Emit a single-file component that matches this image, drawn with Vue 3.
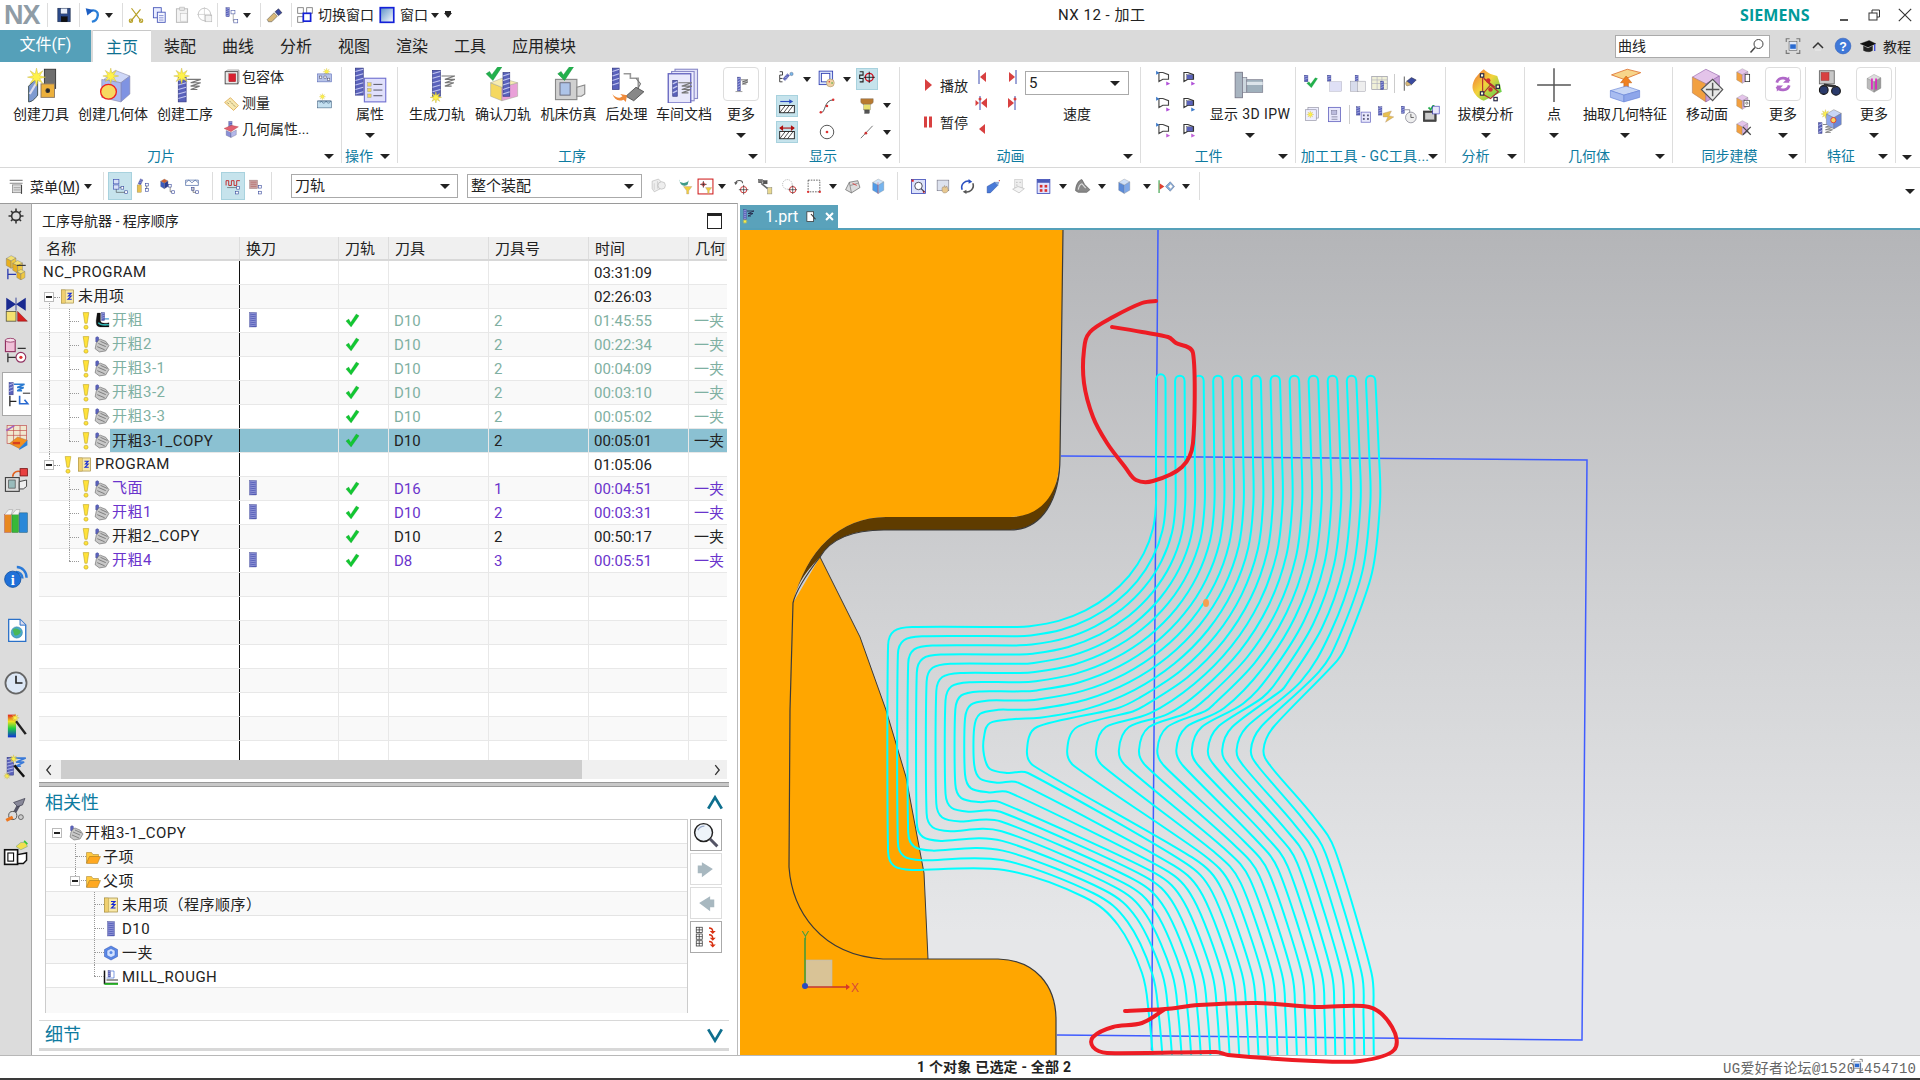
<template>
  <div class="app">
    <!-- title bar -->
    <header class="titlebar">
      <div class="qa">
        <span class="nx">NX</span>
        <i class="vsep"></i>
        <span class="qbtn wide"><Ico n="save" :s="18" /></span>
        <i class="vsep"></i>
        <span class="qbtn"><Ico n="undo" :s="18" /></span><i class="caret small c-undo"></i>
        <i class="vsep"></i>
        <span class="qbtn"><Ico n="cut" :s="18" /></span>
        <span class="qbtn"><Ico n="copy" :s="18" /></span>
        <span class="qbtn dim"><Ico n="paste" :s="18" /></span>
        <span class="qbtn dim"><Ico n="rel" :s="18" /></span>
        <i class="vsep"></i>
        <span class="qbtn"><Ico n="tr1" :s="18" /></span><i class="caret small c-tr"></i>
        <i class="vsep"></i>
        <span class="qbtn b-brush"><Ico n="brush" :s="18" /></span>
        <i class="vsep"></i>
        <span class="qbtn"><Ico n="switchwin" :s="18" /></span>
        <span class="qtext">切换窗口</span>
        <span class="qbtn"><Ico n="win" :s="18" /></span>
        <span class="qtext tight">窗口</span>
        <i class="caret small"></i>
        <i class="caret small under"></i>
      </div>
      <div class="apptitle">NX 12 - 加工</div>
      <div class="siemens">SIEMENS</div>
      <div class="winbtns">
        <Ico n="wmin" :s="16" /><Ico n="wmax" :s="16" /><Ico n="wclose" :s="18" />
      </div>
    </header>

    <!-- tabs -->
    <nav class="tabs">
      <span class="tab-file">文件(F)</span>
      <span class="tab active">主页</span>
      <span v-for="t in tabs" :key="t" class="tab">{{ t }}</span>
      <div class="tabs-right">
        <div class="search"><span>曲线</span><Ico n="mag" :s="16" /></div>
        <span class="tr-ic"><Ico n="fit" :s="18" /></span>
        <span class="tr-ic"><Ico n="chev" :s="16" /></span>
        <span class="tr-ic"><Ico n="help" :s="18" /></span>
        <span class="tr-ic cap"><Ico n="cap" :s="18" /></span>
        <span class="tut">教程</span>
      </div>
    </nav>

    <!-- ribbon -->
    <section class="ribbon">
      <div class="group g1">
        <div class="gbody">
          <div class="big w72"><Ico n="createTool" :s="36" /><span>创建刀具</span></div>
          <div class="big w72"><Ico n="createGeom" :s="36" /><span>创建几何体</span></div>
          <div class="big w72"><Ico n="createOp" :s="36" /><span>创建工序</span></div>
          <div class="smalls">
            <div class="sm"><Ico n="bbox" :s="17" /><span>包容体</span></div>
            <div class="sm"><Ico n="measure" :s="17" /><span>测量</span></div>
            <div class="sm"><Ico n="geoprop" :s="17" /><span>几何属性...</span></div>
          </div>
          <div class="iconcol"><Ico n="s1" :s="17" /><Ico n="s2" :s="17" /></div>
        </div>
        <div class="glabel"><span>刀片</span><i class="caret"></i></div>
      </div>

      <div class="group g2">
        <div class="gbody"><div class="big fill"><Ico n="attr" :s="36" /><span>属性</span><i class="caret"></i></div></div>
        <div class="glabel left"><span>操作</span><i class="caret"></i></div>
      </div>

      <div class="group g3">
        <div class="gbody">
          <div class="big" v-for="b in opBtns" :key="b.t" :class="b.c"><Ico :n="b.n" :s="36" /><span>{{ b.t }}</span></div>
          <div class="big w50"><div class="morebox"><Ico n="more1" :s="22" /></div><span>更多</span><i class="caret"></i></div>
        </div>
        <div class="glabel"><span>工序</span><i class="caret"></i></div>
      </div>

      <div class="group g4">
        <div class="gbody">
          <div class="dispgrid">
            <div v-for="d in dispIcons" :key="d.n" class="dcell">
              <span class="dic" :class="{ on: d.on }"><Ico :n="d.n" :s="18" /></span><i v-if="d.caret" class="caret small"></i>
            </div>
          </div>
        </div>
        <div class="glabel"><span>显示</span><i class="caret"></i></div>
      </div>

      <div class="group g5">
        <div class="gbody">
          <div class="playcol">
            <div class="pl"><Ico n="play" :s="16" /><span>播放</span></div>
            <div class="pl"><Ico n="pause" :s="16" /><span>暂停</span></div>
          </div>
          <div class="animgrid">
            <Ico v-for="a in animIcons" :key="a" :n="a" :s="16" />
          </div>
          <div class="speed">
            <div class="spin"><span>5</span><i class="caret"></i></div>
            <span class="speedlabel">速度</span>
          </div>
        </div>
        <div class="glabel"><span>动画</span><i class="caret"></i></div>
      </div>

      <div class="group g6">
        <div class="gbody">
          <div class="wpgrid"><Ico v-for="w in wpIcons" :key="w" :n="w" :s="18" /></div>
          <div class="big w90"><Ico n="ipw" :s="34" /><span>显示 3D IPW</span><i class="caret"></i></div>
        </div>
        <div class="glabel"><span>工件</span><i class="caret"></i></div>
      </div>

      <div class="group g7">
        <div class="gbody tools">
          <div class="toolrow"><Ico v-for="m in mtTop" :key="m" :n="m" :s="19" :class="{ sepic: m === 'mt5' }" /></div>
          <div class="toolrow"><Ico v-for="m in mtBot" :key="m" :n="m" :s="19" :class="{ sepic: m === 'mt8' }" /></div>
        </div>
        <div class="glabel wide"><span>加工工具 - GC工具...</span><i class="caret"></i></div>
      </div>

      <div class="group g8">
        <div class="gbody"><div class="big fill"><Ico n="draft" :s="38" /><span>拔模分析</span><i class="caret"></i></div></div>
        <div class="glabel"><span>分析</span><i class="caret"></i></div>
      </div>

      <div class="group g9">
        <div class="gbody">
          <div class="big w58"><Ico n="point" :s="36" /><span>点</span><i class="caret"></i></div>
          <div class="big w90b"><Ico n="extract" :s="36" /><span>抽取几何特征</span><i class="caret"></i></div>
        </div>
        <div class="glabel"><span>几何体</span><i class="caret"></i></div>
      </div>

      <div class="group g10">
        <div class="gbody">
          <div class="big w60"><Ico n="moveface" :s="38" /><span>移动面</span></div>
          <div class="iconcol three"><Ico n="sy1" :s="18" /><Ico n="sy2" :s="18" /><Ico n="sy3" :s="18" /></div>
          <div class="big w50"><div class="morebox"><Ico n="sync" :s="22" /></div><span>更多</span><i class="caret"></i></div>
        </div>
        <div class="glabel"><span>同步建模</span><i class="caret"></i></div>
      </div>

      <div class="group g11">
        <div class="gbody">
          <div class="iconcol two"><Ico n="binoc" :s="28" /><Ico n="feat2" :s="28" /></div>
          <div class="big w50"><div class="morebox"><Ico n="featm" :s="22" /></div><span>更多</span><i class="caret"></i></div>
        </div>
        <div class="glabel"><span>特征</span><i class="caret"></i></div>
      </div>
      <div class="ribbon-end"><i class="caret"></i></div>
    </section>

    <!-- toolbar -->
    <section class="toolbar">
      <div class="menu-btn"><Ico n="menu" :s="18" /><span>菜单(<u>M</u>)</span><i class="caret small"></i></div>
      <i class="tsep"></i>
      <span v-for="t in tbLeft" :key="t.n" class="tb" :class="{ on: t.on }" :style="{ width: t.w + 'px' }"><Ico :n="t.n" :s="17" /></span>
      <i class="tsep grow"></i>
      <span v-for="t in tbLeft2" :key="t.n" class="tb" :class="{ on: t.on }" :style="{ width: t.w + 'px' }"><Ico :n="t.n" :s="17" /></span>
      <i class="tsep"></i>
      <div class="sel-box s1"><span>刀轨</span><i class="caret"></i></div>
      <div class="sel-box s2"><span>整个装配</span><i class="caret"></i></div>
      <template v-for="(t, idx) in tbRight" :key="idx">
        <i v-if="t.sep" class="tsep mid"></i>
        <span v-else-if="t.caret" class="tb caretonly"><i class="caret small"></i></span>
        <span v-else class="tb" :style="{ width: t.w + 'px' }"><Ico :n="t.n" :s="17" /></span>
      </template>
      <i class="tsep last"></i>
      <i class="caret corner"></i>
    </section>

    <!-- main -->
    <main class="main">
      <aside class="rail">
        <div v-for="r in railItems" :key="r.n" class="railitem" :class="{ active: r.active }" :style="{ marginTop: r.mt + 'px' }">
          <Ico :n="r.n" :s="r.s || 26" />
        </div>
      </aside>

      <div class="panel">
        <div class="panel-head"><span>工序导航器 - 程序顺序</span><i class="maxbox"></i></div>
        <div class="table">
          <div class="trow thead">
            <div v-for="h in headers" :key="h" class="cell">{{ h }}</div>
          </div>
          <div v-for="(r, idx) in rows" :key="idx" class="trow" :class="[r.color, { alt: idx % 2 === 1, picked: r.sel }]">
            <div class="cell namecell" :class="'lvl' + r.lvl">
              <i v-if="r.tv1" class="tv tv1" :class="r.tv1"></i>
              <i v-if="r.tv2" class="tv tv2" :class="r.tv2"></i>
              <i v-if="r.lvl === 2" class="th"></i>
              <i v-if="r.lvl === 1" class="th th1"></i>
              <span v-if="r.lvl === 1" class="minus"></span>
              <Ico v-if="r.bang" n="bang" :s="18" class="bang" />
              <Ico v-if="r.folder" n="folderp" :s="15" class="fold" />
              <Ico v-if="r.lvl === 2" :n="r.cur ? 'opcur' : 'op'" :s="17" class="opic" />
              <span class="lbl">{{ r.name }}</span>
            </div>
            <div class="cell"><Ico v-if="r.tool" n="toolmini" :s="16" class="toolmini" /></div>
            <div class="cell"><Ico v-if="r.d" n="check" :s="15" class="tick" /></div>
            <div class="cell">{{ r.d }}</div>
            <div class="cell">{{ r.no }}</div>
            <div class="cell">{{ r.time }}</div>
            <div class="cell">{{ r.d ? '一夹' : '' }}</div>
          </div>
          <div v-for="n in 8" :key="'e' + n" class="trow" :class="{ alt: n % 2 === 1 }">
            <div v-for="k in 7" :key="k" class="cell"></div>
          </div>
        </div>
        <div class="hscroll">
          <Ico n="arrL" :s="14" />
          <div class="htrack"><div class="hthumb"></div></div>
          <Ico n="arrR" :s="14" />
        </div>
        <div class="splitter"></div>

        <div class="sect-title"><span>相关性</span><Ico n="up" :s="18" /></div>
        <div class="dep">
          <div class="dep-tree">
            <div v-for="(d, idx) in depRows" :key="idx" class="deprow" :class="{ alt: idx % 2 === 1 }">
              <i v-if="d.vA" class="tv dv1" :class="d.vA"></i>
              <i v-if="d.vB" class="tv dv2" :class="d.vB"></i>
              <i v-if="d.lvl > 0" class="th" :class="'dh' + d.lvl"></i>
              <span v-if="d.minus" class="minus" :class="'dm' + d.lvl"></span>
              <Ico :n="d.ic" :s="16" :class="'di' + d.lvl" />
              <span class="lbl">{{ d.t }}</span>
            </div>
            <div class="deprow alt"></div>
          </div>
          <div class="dep-btns">
            <div class="dbtn strong"><Ico n="search" :s="26" /></div>
            <div class="dbtn"><Ico n="arrGR" :s="22" /></div>
            <div class="dbtn"><Ico n="arrGL" :s="22" /></div>
            <div class="dbtn strong"><Ico n="expand" :s="24" /></div>
          </div>
        </div>
        <div class="sect-title second"><span>细节</span><Ico n="down" :s="18" /></div>
      </div>

      <div class="viewarea">
        <div class="tabstrip">
          <div class="filetab"><Ico n="tabop" :s="16" /><span>1.prt</span><Ico n="tabdoc" :s="12" /><Ico n="tabx" :s="11" /></div>
        </div>
        <div class="canvas">
          <svg class="drawing" width="1180" height="825" viewBox="740 230 1180 825">
            <defs>
              <clipPath id="vp"><rect x="740" y="230" width="1180" height="825" /></clipPath>
            </defs>
            <g clip-path="url(#vp)">
              <!-- part -->
              <path fill="#ffa600" d="M740 230H1063L1060 457C1058 500 1040 517 1010 517H886C840 517 806 550 793 603L790 710 789 867C792 910 820 955 883 959H998C1035 960 1056 985 1056 1020V1055H740Z" />
              <path fill="#ffa600" d="M820 557L860 637 886 710 906 777 924 873 928 959H800L789 867 790 710 793 603Z" />
              <path fill="#5f3c00" d="M1060 457C1060 492 1042 517 1010 517H886C840 517 806 550 793 603 798 580 808 570 820 557 830 540 850 530 884 530H1010C1042 530 1060 500 1060 457Z" />
              <path fill="none" stroke="#3a3a3a" stroke-width="1.2" d="M1063 230L1060 457C1060 500 1042 530 1010 530H884C850 530 830 540 820 557 806 575 796 590 793 603L790 710 789 867C792 910 820 955 883 959H998C1035 960 1056 985 1056 1020V1055" />
              <path fill="none" stroke="#3a3a3a" stroke-width="1" d="M820 557L860 637 886 710 906 777 924 873 928 959" />
              <!-- blue box -->
              <path fill="none" stroke="#3f5cff" stroke-width="1.5" d="M1158 230L1151.5 1050M1061 456L1587 460 1582 1040 1057 1035" />
              <!-- tool path -->
              <path v-for="(d, i) in toolPaths" :key="i" :d="d" fill="none" stroke="#00ffff" stroke-width="2" />
              <ellipse cx="1206" cy="603" rx="3" ry="4" fill="#f4a050" />
              <!-- WCS -->
              <rect x="806" y="960" width="26" height="27" fill="#d9c396" stroke="#bbb" stroke-width=".6" />
              <path d="M805 987V938" stroke="#3a9a3a" stroke-width="1.5" />
              <path d="M805 987H846" stroke="#c8352a" stroke-width="1.5" />
              <path d="M846 984L850 987 846 990Z" fill="#d8352a" />
              <circle cx="805" cy="986" r="3" fill="#2a4ac0" />
              <text x="805" y="940" class="axis y">Y</text>
              <text x="851" y="992" class="axis x">X</text>
            </g>
            <!-- red marks -->
            <path fill="none" stroke="#ed1c24" stroke-width="4" stroke-linejoin="round" stroke-linecap="round" :d="redTop" />
            <path fill="none" stroke="#ed1c24" stroke-width="4" stroke-linejoin="round" stroke-linecap="round" :d="redBottom" />
          </svg>
        </div>
      </div>
    </main>

    <!-- status -->
    <footer class="status">
      <span class="status-text">1 个对象 已选定 - 全部 2</span>
      <span class="watermark">UG爱好者论坛@15201454710</span>
      <Ico n="fit" :s="14" class="wm-ic" />
    </footer>
    <div class="bottomedge"></div>
  </div>
</template>

<script setup>
import { h } from 'vue'

// tiny svg string helpers, every icon is drawn on a 32x32 box
const P = (d, f = 'none', s = '#333', w = 1.5) => `<path d="${d}" fill="${f}" stroke="${s}" stroke-width="${w}"/>`
const R = (x, y, w, hh, f, s = '#333', sw = 1) => `<rect x="${x}" y="${y}" width="${w}" height="${hh}" fill="${f}" stroke="${s}" stroke-width="${sw}"/>`
const C = (cx, cy, r, f, s = '#333', sw = 1) => `<circle cx="${cx}" cy="${cy}" r="${r}" fill="${f}" stroke="${s}" stroke-width="${sw}"/>`

const burst = (cx, cy, r) => {
  const pts = []
  for (let k = 0; k < 16; k++) {
    const a = (k * Math.PI) / 8
    const q = k % 2 ? r * 0.38 : r
    pts.push(`${(cx + q * Math.cos(a)).toFixed(1)},${(cy + q * Math.sin(a)).toFixed(1)}`)
  }
  return `<polygon points="${pts.join(' ')}" fill="#fff24a" stroke="#c9b53a" stroke-width=".4"/>`
}
const mill = (x, y, w, hh) => {
  let s = R(x, y, w, hh, '#5a62bb', '#30357f', 0.6)
  for (let k = 3; k < hh; k += 4) s += P(`M${x} ${y + k}l${w} -2`, 'none', '#c4c8f0', 1)
  return s
}
const trail = (x, y) => P(`M${x} ${y}h12l-9 3h9l-9 3h8l-8 3h6`, 'none', '#777', 1)
const tick = (x, y, k = 1) => P(`M${x} ${y + 5 * k}l${3 * k} ${-2 * k} ${2 * k} ${3 * k} ${6 * k} ${-8 * k} ${3 * k} ${1 * k} ${-8 * k} ${12 * k}Z`, '#22b14c', '#118a3a', 0.4)
const cube = (x, y, k, a, b, c) =>
  P(`M${x} ${y + 6 * k}L${x + 10 * k} ${y}L${x + 20 * k} ${y + 5 * k}L${x + 10 * k} ${y + 11 * k}Z`, a, '#777', 0.5) +
  P(`M${x} ${y + 6 * k}L${x + 10 * k} ${y + 11 * k}V${y + 26 * k}L${x} ${y + 20 * k}Z`, b, '#777', 0.5) +
  P(`M${x + 10 * k} ${y + 11 * k}L${x + 20 * k} ${y + 5 * k}V${y + 20 * k}L${x + 10 * k} ${y + 26 * k}Z`, c, '#777', 0.5)
const tri = (flip, c) => (flip ? P('M22 6L10 16 22 26Z', c, 'none') : P('M10 6L22 16 10 26Z', c, 'none'))
const wp = (x, c) => P('M7 8H14L24 12V20H14L7 24V8Z', '#fff', '#444', 2) + P('M2 5L8 9 2 12Z', '#3b78c8', 'none') + P('M20 24L27 28 20 31Z', c, 'none')
const wpb = (x, c) => P('M7 8H14L24 12V20H14L7 24V8Z', '#fff', '#333', 2) + R(12, 12, 11, 8, '#5a62bb', '#333', 0.6) + P('M20 24L27 28 20 31Z', c, 'none')
const small2 = (x, y) => R(x, y, 5, 5, '#fff', '#4050a0', 1.2)

const icons = {
  save: R(5, 4, 22, 24, '#2c4a8a', '#112244') + R(10, 4, 12, 10, '#e8eefa', '#112244', 0.6) + R(11, 19, 11, 9, '#111', '#000', 0.5),
  undo: P('M9 12C15 4 27 8 24 19 23 24 19 27 14 28', 'none', '#2a7fd8', 4) + P('M3 4L17 7 6 17Z', '#1d5fc4', 'none'),
  cut: P('M6 28L24 6M26 28L8 4', 'none', '#b8a22a', 2.2) + C(7, 26, 3, 'none', '#b8a22a', 2) + C(25, 26, 3, 'none', '#b8a22a', 2),
  copy: R(6, 3, 14, 18, '#e8ecff', '#3f4fb5', 1.5) + R(13, 11, 14, 18, '#f3f5ff', '#3f4fb5', 1.5) + P('M16 17h8M16 21h8M16 25h8', 'none', '#3f4fb5', 1),
  paste: R(6, 5, 20, 24, '#eee', '#999', 1.5) + R(12, 2, 8, 6, '#ddd', '#999', 1) + R(13, 13, 12, 14, '#f8f8f8', '#aaa', 1),
  rel: C(15, 15, 11, 'none', '#aaa', 1.5) + P('M15 2V28M2 15H28', 'none', '#aaa', 1) + R(17, 17, 11, 11, '#eee', '#999', 1),
  tr1: mill(7, 3, 6, 16) + R(16, 8, 7, 6, '#fff', '#4050a0', 1) + R(21, 24, 7, 6, '#fff', '#4050a0', 1) + P('M20 14V27H21', 'none', '#777', 1),
  brush: P('M4 24L16 12 22 18 12 28 6 28Z', '#d8b878', '#555', 1) + P('M18 10L24 5 30 12 24 17Z', '#3a4aa0', '#223', 1),
  switchwin: R(3, 3, 10, 10, '#fff', '#777', 1.5) + R(19, 3, 10, 10, '#fff', '#777', 1.5) + R(3, 19, 10, 10, '#fff', '#777', 1.5) + R(13, 13, 13, 14, '#fff', '#1320d8', 3),
  win: `<defs><linearGradient id="gw" x1="0" y1="0" x2="1" y2="1"><stop offset="0" stop-color="#5a8fc8"/><stop offset="1" stop-color="#fff"/></linearGradient></defs>` + R(4, 3, 24, 26, 'url(#gw)', '#1320d8', 3),
  wmin: P('M8 26H24', 'none', '#555', 4),
  wmax: R(6, 12, 16, 14, '#fff', '#333', 2) + P('M12 12V6H27V20H22', 'none', '#333', 2),
  wclose: P('M5 5L27 27M27 5L5 27', 'none', '#333', 2),
  mag: C(19, 12, 9, '#fff', '#444', 2) + P('M12 19L3 29', 'none', '#444', 3),
  fit: P('M4 9V3H10M22 3H28V9M28 23V29H22M10 29H4V23', 'none', '#777', 2) + R(9, 8, 14, 16, '#dfe8f8', '#555', 1) + R(11, 13, 10, 8, '#2a6ad0', 'none', 0),
  chev: P('M6 20L16 10 26 20', 'none', '#333', 3) + P('M10 24H22', 'none', '#fff', 1),
  help: C(16, 16, 14, '#3f78d8', '#2a5ab8', 1) + `<text x="16" y="24" text-anchor="middle" font-size="22" font-weight="700" font-family="Liberation Sans" fill="#fff">?</text>`,
  cap: P('M2 12L18 6 30 12 16 18Z', '#111', '#000', 0.5) + P('M8 16V24C14 27 20 27 24 24V16L16 20Z', '#222', '#000', 0.5) + P('M28 13V25', 'none', '#2233dd', 2),

  createTool: P('M5 31V17L13 9V25C11 28 8 31 5 31Z', '#7d9ad0', '#344', 0.8) + P('M6 24L12 14', 'none', '#dde', 2) + R(19, 2, 10, 17, '#6e6e6e', '#333', 0.8) + R(16, 15, 12, 12, '#ecb03c', '#876', 0.8) + C(22, 21, 1.6, '#222') + burst(12, 9, 8),
  createGeom: P('M8 11L18 3 31 8 23 14Z', '#cfd8f8', '#88a', 0.5) + P('M23 14L31 8V24L23 31Z', '#7f93e2', '#88a', 0.5) + P('M6 11L23 14V31L6 27Z', '#a9b7f0', '#88a', 0.5) + `<ellipse cx="12" cy="22" rx="7" ry="6.5" fill="#f7d860" stroke="#e22" stroke-width="1.2"/>` + burst(14, 8, 7),
  createOp: mill(10, 9, 7, 22) + trail(18, 11) + burst(13, 8, 7),
  attr: mill(3, 1, 7, 24) + R(11, 10, 19, 21, '#e0e0fb', '#7070d0', 1) + [14, 19, 24].map((y) => R(14, y, 3, 3, '#f0d860', '#998', 0.4) + P(`M19 ${y + 1.5}h8`, 'none', '#667', 1)).join(''),
  genPath: mill(12, 3, 7, 23) + trail(20, 8) + burst(15, 27, 5),
  verify: P('M5 14L15 18V30L5 26Z', '#f5d860', '#aa9', 0.5) + P('M15 18L29 14V26L15 30Z', '#e9a0d8', '#aa9', 0.5) + P('M5 14L15 10 29 14 15 18Z', '#f7ecb0', '#aa9', 0.5) + mill(16, 5, 6, 21) + tick(1, 1, 1),
  machine: R(4, 11, 19, 18, '#d0d0d0', '#888', 1) + R(8, 14, 9, 11, '#aec4e8', '#667', 0.8) + P('M23 18L30 16V24L27 26H23Z', '#ddd', '#888', 1) + tick(6, 1, 1),
  post: mill(3, 1, 6, 19) + P('M13 6H19V10H26V22', 'none', '#999', 1.4) + P('M24 10L28 15 24 22', 'none', '#777', 1) + P('M15 26L24 18 31 22 22 30Z', '#888', '#444', 0.7) + P('M3 24C6 28 10 28 12 26L10 24 16 25 15 31 13 29C8 31 5 29 3 24Z', '#ef8a3a', 'none'),
  shopdoc: R(8, 2, 20, 26, '#e6e6fa', '#8a8ac8', 1) + R(5, 4, 20, 26, '#eef', '#8a8ac8', 1) + R(2, 6, 20, 26, '#e8e8fb', '#6666c0', 1.2) + mill(6, 12, 4, 14) + trail(11, 14),
  more1: mill(11, 6, 4, 20) + P('M16 10h10l-8 3h8l-8 3h6', 'none', '#555', 1.2) + P('M8 27h10', 'none', '#777', 1),
  ipw: R(2, 4, 7, 24, '#a8b4c0', '#778', 0.8) + R(9, 9, 4, 14, '#ccd6de', '#778', 0.6) + R(13, 11, 15, 12, '#9fb0bc', '#778', 0.6) + R(13, 13, 15, 3, '#dce4ea', 'none', 0),
  draft: `<defs><linearGradient id="gd" x1="0" y1="0" x2="1" y2="1"><stop offset="0" stop-color="#ef6a38"/><stop offset=".45" stop-color="#f3d43c"/><stop offset="1" stop-color="#38cf50"/></linearGradient></defs>` + P('M14 2C8 7 4 12 4 18 4 22 8 28 14 30L30 22 28 14 26 8C22 7 18 6 14 2Z', 'url(#gd)', 'none') + P('M13 8V24L20 16 27 22 20 28 13 24M20 16L14 10 24 18', 'none', '#b03030', 1) + R(11, 6, 3, 3, '#ffd', '#224', 1) + R(11, 22, 3, 3, '#ffd', '#224', 1) + R(25, 16, 3, 3, '#ffd', '#224', 1) + R(23, 27, 3, 3, '#ffd', '#224', 1) + C(18, 12, 2, '#d03030', 'none') + C(20, 20, 2, '#d03030', 'none'),
  point: P('M16 1V31M1 16H31', 'none', '#555', 1.3),
  extract: P('M4 7L18 2 30 5 15 11Z', '#f7d58a', '#e07a3a', 0.8) + P('M15 21V14H12L17 8 22 14H19V21Z', '#f08020', '#c06010', 0.5) + P('M3 21L17 17 29 21 15 25Z', '#c8d6f5', '#6a86d8', 0.6) + P('M3 21L15 25V31L3 27Z', '#a8bcf0', '#6a86d8', 0.6) + P('M15 25L29 21V27L15 31Z', '#8ea6ea', '#6a86d8', 0.6),
  moveface: P('M3 9L15 2 27 8 15 15Z', '#e4c4ea', '#9a6ab0', 0.6) + P('M3 9L15 15V31L3 23Z', '#f2a040', '#b86', 0.6) + P('M15 15L27 8V24L15 31Z', '#c8a0d8', '#9a6ab0', 0.6) + P('M21 11L30 20 21 30 11 20Z', '#e8e8e8', '#555', 1) + P('M21 14V26M15 20H27', 'none', '#555', 1.3),
  sy1: cube(3, 3, 1, '#e4c4ea', '#f2a040', '#d8b0e0') + R(18, 13, 8, 13, '#fff', '#333', 1.4),
  sy2: cube(3, 3, 1, '#e4c4ea', '#f2a040', '#d8b0e0') + R(16, 13, 10, 11, '#fff', '#333', 1.2) + C(21, 18, 2, 'none', '#333', 1),
  sy3: cube(3, 3, 1, '#e4c4ea', '#f2a040', '#d8b0e0') + P('M14 14L28 28M28 14L14 28', 'none', '#444', 2.2),
  sync: P('M7 14C9 6 21 5 25 12', 'none', '#b068c8', 4) + P('M25 5V14H16Z', '#b068c8', 'none') + P('M25 18C23 26 11 27 7 20', 'none', '#b068c8', 4) + P('M7 27V18H16Z', '#b068c8', 'none'),
  binoc: R(5, 2, 17, 15, '#c8c8c8', '#666', 1) + R(7, 4, 9, 9, '#d84040', '#933', 0.6) + C(10, 24, 5, '#2a3a6a', '#111', 1.2) + C(24, 25, 5, '#2a3a6a', '#111', 1.2) + P('M10 18L24 20', 'none', '#333', 3),
  feat2: mill(4, 18, 4, 12) + trail(9, 20) + burst(12, 8, 5) + cube(13, 3, 0.85, '#c8d6f5', '#8ea6ea', '#6a86d8') + C(21, 15, 3, '#f7d860', '#d33', 1),
  featm: cube(6, 2, 1, '#ddd', '#bbb', '#999') + P('M13 8V24M19 8V24', 'none', '#e020c0', 2.4),

  bbox: R(4, 5, 24, 23, '#e8e8e8', '#333', 1.5) + R(11, 9, 13, 15, '#d82030', '#711', 0.6) + P('M4 5L9 2H30V24L28 28', 'none', '#555', 1),
  measure: P('M3 14L14 5 29 20 20 29Z', '#f7e8b0', '#d8a040', 1.4) + P('M8 14l3 3M12 11l3 3M16 15l3 3M20 19l3 3', 'none', '#8a7a4a', 1.4),
  geoprop: mill(11, 1, 6, 11) + P('M2 14L16 8 29 11 15 20Z', '#e06070', '#a33', 0.6) + P('M6 18L15 22V31L6 27Z', '#8a90d8', '#557', 0.6) + P('M15 22L25 17V26L15 31Z', '#b4b8ea', '#557', 0.6),
  s1: burst(20, 9, 7) + R(3, 13, 26, 15, '#b8c4e8', '#4a5ab0', 1) + R(7, 17, 4, 4, '#fff', '#335', 0.8) + R(15, 17, 4, 4, '#fff', '#335', 0.8) + R(22, 21, 4, 4, '#fff', '#335', 0.8),
  s2: burst(12, 7, 6) + R(3, 15, 26, 13, '#c4e0f0', '#357', 1) + P('M4 15h24l-3 4h-3l-3-4-3 4h-3l-3-4-3 4', 'none', '#357', 1),

  d1: P('M3 3H8V9H3M3 9V15H8M3 15V21H8', 'none', '#333', 1.6) + mill(12, 7, 5, 12).replace('<rect', '<rect transform="rotate(40 15 13)"') + C(24, 7, 3, '#7ab8e8', '#446', 0.6),
  d2: R(2, 2, 24, 24, '#dbe6fa', '#2a3ab0', 1.5) + R(6, 6, 15, 15, '#fff', '#2a3ab0', 1.5) + C(22, 23, 7, '#f0d0a0', '#985', 0.8) + C(20, 21, 1.3, '#d33', 'none') + C(25, 23, 1.3, '#3a3', 'none'),
  d3: P('M3 3H9V9H3V15H9V21H3', 'none', '#222', 2) + C(20, 13, 7, 'none', '#d01020', 2.5) + P('M20 3V23M10 13H30', 'none', '#111', 1.5),
  d4: P('M4 8H23', 'none', '#2a4ac0', 2) + P('M20 4L27 8 20 12Z', '#2a4ac0', 'none') + R(3, 15, 26, 13, '#fff', '#111', 1.5) + P('M3 28L13 15M10 28L20 15M17 28L27 15', 'none', '#111', 1.3),
  d5: P('M5 28C14 28 10 6 27 5', 'none', '#333', 1.5) + C(5, 27, 2.2, '#d33', 'none') + C(16, 16, 2.2, '#d33', 'none') + C(27, 5, 2.2, '#d33', 'none'),
  d6: P('M5 3H27V9C27 12 22 13 22 13H10C10 13 5 12 5 9Z', '#b87a30', '#765', 0.8) + R(10, 13, 12, 10, '#e8e070', '#776', 0.6) + R(12, 23, 8, 6, '#555', '#222', 0.6),
  d7: P('M4 9H28', 'none', '#b01010', 2) + P('M2 9L9 4V14ZM30 9L23 4V14Z', '#b01010', 'none') + R(3, 15, 26, 13, '#fff', '#111', 1.5) + P('M3 28L13 15M10 28L20 15M17 28L27 15', 'none', '#111', 1.3),
  d8: C(16, 16, 12, '#fff', '#444', 1.6) + C(16, 16, 2.4, '#d33', 'none'),
  d9: P('M5 27L26 5', 'none', '#444', 1.3) + C(14, 18, 2.4, '#c33', 'none'),

  play: P('M10 4L24 16 10 28Z', '#d84040', 'none'),
  pause: R(8, 5, 6, 22, '#d84040', 'none', 0) + R(18, 5, 6, 22, '#d84040', 'none', 0),
  a1: P('M10 2V30', 'none', '#3a4ab0', 2) + P('M24 6L12 16 24 26Z', '#d84040', 'none'),
  a2: P('M22 2V30', 'none', '#3a4ab0', 2) + P('M8 6L20 16 8 26Z', '#d84040', 'none'),
  a3: P('M12 2V30', 'none', '#3a4ab0', 2) + P('M26 6L14 16 26 26Z', '#d84040', 'none') + C(12, 8, 3, '#d84040', 'none') + P('M3 10L10 16 3 22Z', '#d84040', 'none'),
  a4: P('M20 2V30', 'none', '#3a4ab0', 2) + P('M6 6L18 16 6 26Z', '#d84040', 'none') + C(20, 8, 3, '#d84040', 'none'),
  a5: tri(true, '#d84040'),

  w1: wp(0, '#b050d8'), w2: wpb(0, '#b050d8'), w3: wp(0, '#b050d8'), w4: wpb(0, '#3a78c8'), w5: wp(0, '#c060d8'), w6: wpb(0, '#c060d8'),

  mt1: mill(4, 2, 6, 11) + tick(8, 9, 1.3),
  mt2: mill(4, 2, 6, 10) + R(8, 13, 20, 16, '#dfe0f6', '#99a', 0.6),
  mt3: mill(12, 2, 5, 12) + R(4, 12, 14, 17, '#d8dcec', '#778', 0.6) + R(16, 12, 13, 17, '#eee', '#778', 0.6),
  mt4: R(3, 4, 26, 22, '#f0f0d8', '#889', 1) + P('M3 10H29M3 16H29M12 4V26M20 4V26', 'none', '#aab', 1) + mill(18, 12, 5, 14),
  mt5: P('M9 4V28', 'none', '#777', 2) + P('M13 12L21 6 29 10 21 18Z', '#3a4aa0', '#223', 0.8) + P('M13 12C10 14 11 20 14 20L21 18Z', '#d8b878', '#555', 0.6),
  mt6: R(10, 4, 18, 18, '#eef', '#889', 1) + R(6, 8, 18, 18, '#eef', '#889', 1) + burst(14, 16, 6),
  mt7: R(6, 4, 20, 24, '#e8e8fb', '#6666c0', 1.4) + R(11, 9, 9, 7, '#bbd', '#557', 0.6) + P('M11 20h10M11 24h10', 'none', '#557', 1),
  mt8: mill(4, 3, 6, 14) + R(12, 12, 16, 17, '#e8e8fb', '#6666c0', 1.2) + [16, 22].map((y) => R(15, y, 3, 3, '#557', 'none', 0) + R(22, y, 3, 3, '#557', 'none', 0)).join(''),
  mt9: mill(4, 3, 6, 14) + P('M12 14L26 10 22 18 30 20 16 29 20 20 12 20Z', '#e8c050', '#a87', 0.6),
  mt10: mill(4, 2, 5, 12) + P('M10 8H18V14', 'none', '#667', 1.2) + C(20, 21, 9, '#eee', '#667', 1) + P('M20 15V21H25', 'none', '#333', 1.2),
  mt11: R(2, 10, 22, 18, '#444', '#111', 0.6) + R(5, 13, 16, 12, '#ccc', '#444', 0.6) + tick(10, 1, 0.8) + R(18, 2, 11, 13, '#e8e8fb', '#3030b0', 1),

  menu: P('M3 6H26M3 11H26', 'none', '#888', 2) + R(8, 14, 16, 14, '#ddd', '#666', 1) + P('M10 19H22M10 23H22', 'none', '#888', 1.2) + P('M24 14V30', 'none', '#444', 2),
  t1: R(3, 3, 10, 8, '#d8e0f8', '#3a4ab0', 1.2) + R(3, 13, 10, 8, '#d8e0f8', '#3a4ab0', 1.2) + small2(17, 16) + small2(24, 24) + P('M8 21V27H24M14 18H17', 'none', '#333', 1),
  t2: mill(8, 2, 5, 10).replace('<rect', '<rect transform="rotate(25 10 7)"') + R(4, 13, 8, 14, '#e8c050', '#776', 0.6) + small2(20, 10) + small2(20, 20) + P('M22 15V20', 'none', '#333', 1),
  t3: cube(3, 2, 0.7, '#d06030', '#3a5ac0', '#2a3a90') + small2(18, 12) + small2(24, 24) + P('M21 17V26H24', 'none', '#333', 1),
  t4: P('M3 4H27V14H3ZM3 9L9 4 15 9 21 4 27 9', 'none', '#3a5a9a', 1.2) + small2(14, 18) + small2(22, 24) + P('M17 18V27H22', 'none', '#333', 1),
  t5: P('M2 14V5H7V14H12V5H17V14H22V5H28', 'none', '#c01010', 1.6) + P('M4 18H26', 'none', '#333', 1) + small2(22, 16) + small2(20, 25),
  t6: R(3, 4, 15, 16, '#c9a0a0', '#977', 0.8) + P('M5 8h11M5 12h11M5 16h11', 'none', '#b06060', 1) + small2(20, 14) + small2(20, 25),
  t7: P('M4 6L16 2 20 6V20L8 26 4 20Z', '#eee', '#aaa', 1) + P('M8 10V22M14 6V20', 'none', '#bbb', 1) + C(22, 14, 7, '#eee', '#aaa', 1),
  t8: P('M6 3C4 10 20 12 24 4L22 12C14 18 8 14 6 3Z', '#3f9a88', 'none') + P('M14 16H30L24 24V30H20V24Z', '#f0d040', '#a88', 0.6),
  t9: R(2, 2, 28, 28, '#fff', '#d02020', 2) + P('M12 6V18M6 12H18', 'none', '#111', 1.4) + C(12, 12, 3, 'none', '#d02020', 1.4) + P('M16 18H28L23 24V29H20V24Z', '#f0d040', '#a88', 0.6),
  t10: P('M5 10C6 3 18 3 18 10', 'none', '#555', 2) + P('M2 8H9L5 13Z', '#555', 'none') + C(20, 22, 6, 'none', '#d02020', 1.6) + P('M20 13V31M11 22H29', 'none', '#222', 1.2),
  t11: R(3, 3, 7, 6, '#777', '#333', 0.8) + R(12, 5, 7, 6, '#555', '#333', 0.8) + P('M8 10L20 20', 'none', '#666', 3) + R(20, 18, 8, 12, '#e8d890', '#776', 0.8),
  t12: C(12, 12, 9, '#fff', '#777', 1).replace('stroke="#777"', 'stroke="#777" stroke-dasharray="2 2"') + C(22, 22, 6, 'none', '#d02020', 1.6) + P('M22 14V30M14 22H30', 'none', '#222', 1.2),
  t13: `<rect x="4" y="4" width="22" height="22" fill="none" stroke="#333" stroke-width="1.4" stroke-dasharray="3 2"/>` + C(4, 26, 2.2, '#d33', 'none') + C(26, 26, 2.2, '#d33', 'none'),
  t14: P('M3 22L10 8 26 5 30 18 14 28Z', '#ddd', '#555', 1.2) + P('M10 8L14 28M12 14L26 10', 'none', '#555', 1) + P('M16 10L24 14', 'none', '#d33', 1.5),
  t15: cube(5, 2, 1.05, '#cfe4f8', '#4f9ae8', '#75b4ee') + P('M15 8V30', 'none', '#e04060', 0.8),
  t16: R(3, 3, 26, 26, '#dce2fa', '#2a3ab0', 1.4) + R(3, 3, 4, 4, '#d22', 'none', 0) + C(26, 26, 2, '#d22', 'none') + C(16, 15, 7, '#fff', '#334', 1.6) + P('M21 20L27 26', 'none', '#334', 2),
  t17: R(4, 4, 22, 20, '#dde2ee', '#667', 1) + P('M14 26C12 20 14 14 17 18L18 14 20 18 22 15 25 22C25 28 16 30 14 26Z', '#e8c890', '#876', 0.8),
  t18: P('M6 22C2 12 12 4 20 6', 'none', '#2a50c0', 3) + P('M18 2L25 7 18 11Z', '#2a50c0', 'none') + P('M26 10C30 20 20 28 12 26', 'none', '#555', 3) + P('M14 22L7 26 14 30Z', '#555', 'none'),
  t19: P('M4 28V16L18 8 24 14 10 28Z', '#4a7ad8', '#2a4a98', 0.8) + P('M18 8L24 14 26 8Z', '#8ab0ea', '#2a4a98', 0.6) + C(27, 5, 1.2, '#d33', 'none'),
  t20: R(9, 3, 14, 16, '#eee', '#bbb', 1) + C(13, 8, 1, '#999', 'none') + C(19, 8, 1, '#999', 'none') + C(13, 13, 1, '#999', 'none') + P('M5 21L15 16 27 20 17 28Z', '#f4f4f4', '#aaa', 1),
  t21: R(4, 3, 24, 26, '#e0e4ff', '#2a3ab0', 1.4) + R(4, 3, 24, 6, '#4a5ab8', 'none', 0) + [13, 21].map((y) => R(9, y, 5, 5, '#d83030', 'none', 0) + R(18, y, 5, 5, '#d83030', 'none', 0)).join(''),
  t22: P('M3 24C3 14 8 4 15 3L20 12 30 22 24 27H8Z', '#888', '#444', 1) + P('M8 22C9 16 12 12 15 11L22 19', 'none', '#ddd', 2),
  t23: cube(5, 2, 1.05, '#cfe0f8', '#5a8ad8', '#7fa8e8'),
  t24: P('M2 4V28', 'none', '#2a9a3a', 2) + P('M3 10L12 16 3 22Z', '#e04030', 'none') + P('M14 16L23 7 31 16 23 25Z', '#7fb0e0', '#557', 0.8) + P('M19 16L24 11 28 16 24 21Z', '#fff', '#557', 0.6),

  r_gear: C(16, 16, 7, 'none', '#333', 2.5) + P('M16 4V9M16 23V28M4 16H9M23 16H28M8 8L11 11M21 21L24 24M24 8L21 11M11 21L8 24', 'none', '#333', 2.5),
  r_asm: cube(4, 2, 0.6, '#f4e070', '#e8b020', '#f0c840') + cube(12, 8, 0.6, '#f4e070', '#e8b020', '#f0c840') + P('M6 18V31M6 25H16', 'none', '#2a3ab0', 1.6) + P('M28 14H17', 'none', '#333', 1.4) + cube(17, 19, 0.5, '#f4e070', '#e8b020', '#f0c840'),
  r_align: P('M4 2L16 10 28 2V18L16 10 4 18Z', '#1a2a90', 'none') + P('M16 2V18', 'none', '#1a2a90', 1) + R(4, 19, 12, 12, '#f4e070', '#554', 1) + P('M18 19L30 31H18Z', '#d82020', '#711', 0.6),
  r_cyl: R(3, 4, 12, 14, '#f0c0d8', '#903060', 1.4) + `<ellipse cx="9" cy="4" rx="6" ry="2.4" fill="#f8e0ec" stroke="#903060"/>` + P('M6 20V31M6 25H16M18 14H28', 'none', '#333', 1.6) + C(22, 25, 6, '#fff', '#903060', 1.4) + C(22, 25, 2, '#d33', 'none'),
  r_op: mill(5, 2, 5, 15) + P('M11 4H24L15 8H23L15 12H21', 'none', '#2a7ad0', 1.8) + P('M6 18V31M6 25H14', 'none', '#222', 1.6) + P('M18 18V28H28L24 23', 'none', '#2a6ad0', 2) + P('M22 15H31', 'none', '#222', 1.2),
  r_grid: R(5, 2, 24, 22, '#f0e8d0', '#c04848', 0.8) + P('M5 8H29M5 14H29M13 2V24M21 2V24', 'none', '#c04848', 0.8) + P('M4 8L14 2', 'none', '#a060c0', 2) + P('M8 24L18 16 30 20 20 30Z', '#f29020', '#964', 0.5) + P('M20 30L30 20V26L20 32Z', '#2a80d8', 'none') + R(12, 22, 9, 3, '#d84020', 'none', 0),
  r_mach: R(3, 13, 17, 17, '#ddd', '#444', 1.4) + R(7, 16, 8, 10, '#9bb', '#444', 0.8) + P('M20 18L29 16V24L25 27H20Z', '#eee', '#444', 1.2) + P('M12 12C12 6 18 4 22 6', 'none', '#e06020', 2) + R(21, 2, 9, 9, '#e84040', '#711', 1),
  r_books: R(2, 8, 8, 22, '#e88820', '#a55', 0.6) + R(11, 8, 8, 22, '#38b838', '#272', 0.6) + R(20, 6, 10, 24, '#2a88d8', '#157', 0.6) + P('M2 8L7 2H12L10 8M11 8L16 2H21L19 8', '#f4f4f4', '#888', 0.5),
  r_info: P('M17 5C24 5 29 11 29 18', 'none', '#2a7ad8', 3) + P('M16 11C20 11 24 14 24 19', 'none', '#2a7ad8', 3) + C(12, 20, 10, '#1f70d8', '#1050a0', 1) + `<text x="12" y="27" text-anchor="middle" font-size="18" font-weight="700" font-family="Liberation Serif" fill="#fff">i</text>`,
  r_doc: P('M7 3H21L28 10V30H7Z', '#fff', '#2a70c8', 1.6) + P('M21 3V10H28', '#dde', '#2a70c8', 1.2) + C(17, 19, 7, '#4aa8c8', '#2a7a9a', 0.5) + P('M12 16C16 12 20 16 22 18 20 22 16 24 14 22Z', '#4ab858', 'none'),
  r_clock: C(16, 16, 13, '#dde8f6', '#666', 2.2) + P('M16 7V16H24', 'none', '#222', 2),
  r_rain: `<defs><linearGradient id="gr" x1="0" y1="0" x2="0" y2="1"><stop offset="0" stop-color="#e02020"/><stop offset=".3" stop-color="#f0e020"/><stop offset=".6" stop-color="#20d040"/><stop offset="1" stop-color="#1030d8"/></linearGradient></defs>` + R(6, 2, 10, 28, 'url(#gr)', 'none', 0) + P('M16 10L28 26', 'none', '#222', 3) + burst(15, 6, 5),
  r_path: mill(5, 4, 8, 22) + P('M12 5H28L16 10H26L16 15H22', 'none', '#3a7ad8', 2) + P('M14 14L26 28', 'none', '#111', 3) + burst(5, 27, 4) + burst(13, 6, 5),
  r_wrench: P('M10 28L20 10', 'none', '#556', 4) + P('M13 8L27 3 24 11 18 13Z', '#889', '#334', 0.8) + C(12, 24, 5, '#ddd', '#555', 1.2) + P('M4 30L12 26', 'none', '#ee7820', 4) + C(22, 26, 3, '#ccc', '#555', 1),
  r_mach2: R(2, 12, 16, 18, '#fff', '#111', 2) + R(6, 16, 7, 10, '#fff', '#111', 1.4) + P('M18 18L29 16V25L25 29H18Z', '#fff', '#111', 1.8) + P('M16 8L22 3H28L30 8 22 12Z', '#f0e050', '#8a8', 0.8) + P('M26 1L30 5', 'none', '#38c838', 2),

  bang: P('M11 1H21L18 20H14Z', '#ffe23a', '#b9a022', 1) + C(16, 27, 3.6, '#ffe23a', '#b9a022', 1),
  op: P('M5 3L8 1 11 3V14L5 11Z', '#5a62bb', '#30357f', 0.5) + P('M10 8L14 6 24 10 30 18 24 28 12 30 4 24 6 14Z', '#c8c8c8', '#555', 1) + P('M10 14L24 20M8 20L22 26M14 10L27 16', 'none', '#555', 1.2),
  opcur: P('M8 2H14V16C14 22 24 22 30 20V28H14C6 28 6 22 6 16Z', '#111', '#000', 0.5) + P('M10 20C14 26 24 24 30 24', 'none', '#30b0b0', 3) + mill(16, 1, 6, 15) + R(22, 12, 8, 2, '#2a8ac8', 'none', 0),
  folderp: R(3, 2, 26, 28, '#f8e8a8', '#a08838', 1.4) + R(3, 2, 8, 28, '#f0d070', '#a08838', 0.8) + P('M16 9H24L18 15H24L17 22H25', 'none', '#1328d8', 2.2),
  toolmini: mill(9, 1, 14, 29),
  check: P('M2 17L8 13 12 20 24 2 30 6 13 30Z', '#12c832', '#0c8a22', 0.5),
  folderopen: P('M3 7H13L16 11H27V16H9L3 28Z', '#ffc940', '#a07820', 1) + P('M9 15H31L25 29H3Z', '#ffa820', '#a07820', 1),
  geom: P('M16 2L29 9V23L16 30 3 23V9Z', '#5a8ae8', '#2a4ab0', 1) + P('M16 7L24 11V21L16 25 8 21V11Z', '#cfe0ff', '#2a4ab0', 0.8) + C(16, 15, 3, '#5a8ae8', 'none'),
  mill: P('M3 3V29H30', 'none', '#111', 3) + P('M3 30H30', 'none', '#2ab82a', 3.5) + mill(10, 3, 5, 13) + P('M16 4H22V18H7', 'none', '#2a5ad0', 1.2) + P('M7 22H30', 'none', '#333', 2),
  arrL: P('M20 5L11 16 20 27', 'none', '#333', 3),
  arrR: P('M12 5L21 16 12 27', 'none', '#333', 3),
  up: P('M4 26L16 6 28 26', 'none', '#0e6f8e', 5),
  down: P('M4 6L16 26 28 6', 'none', '#0e6f8e', 5),
  search: C(13, 13, 11, '#eef4fa', '#222', 1.8) + P('M21 21L30 30', 'none', '#556', 3.6) + P('M6 10C8 6 11 5 14 5', 'none', '#9ac', 1.4),
  arrGR: P('M10 6L26 16 10 28V22H4V11H10Z', '#a8b8c0', 'none'),
  arrGL: P('M22 6L6 16 22 28V22H28V11H22Z', '#a8b8c0', 'none'),
  expand: [3, 12, 21].map((y) => R(3, y, 8, 7, '#fff', '#333', 1) + P(`M3 ${y + 3.5}H11M7 ${y}V${y + 7}`, 'none', '#333', 1) + P(`M20 ${y + 1}C24 ${y + 1} 25 ${y + 3} 25 ${y + 6}`, 'none', '#d83010', 1.8) + P(`M21 ${y + 5}H29L25 ${y + 9}Z`, '#d83010', 'none')).join(''),
  tabop: mill(5, 1, 6, 20) + P('M12 4H26L14 9H24L14 14H20', 'none', '#224', 1.6) + burst(8, 25, 5),
  tabdoc: R(5, 2, 18, 26, '#fff', '#333', 2) + P('M16 8L28 22', 'none', '#333', 3),
  tabx: P('M6 6L26 26M26 6L6 26', 'none', '#fff', 6)
}

const Ico = (props) => h('svg', { width: props.s || 16, height: props.s || 16, viewBox: '0 0 32 32', innerHTML: icons[props.n] })
Ico.props = ['n', 's']

const tabs = ['装配', '曲线', '分析', '视图', '渲染', '工具', '应用模块']

const opBtns = [
  { t: '生成刀轨', n: 'genPath', c: 'w66' },
  { t: '确认刀轨', n: 'verify', c: 'w66' },
  { t: '机床仿真', n: 'machine', c: 'w65' },
  { t: '后处理', n: 'post', c: 'w51' },
  { t: '车间文档', n: 'shopdoc', c: 'w64' }
]

const dispIcons = [
  { n: 'd1', caret: true }, { n: 'd2', caret: true }, { n: 'd3', on: true },
  { n: 'd4', on: true }, { n: 'd5' }, { n: 'd6', caret: true },
  { n: 'd7', on: true }, { n: 'd8' }, { n: 'd9', caret: true }
]
const animIcons = ['a1', 'a2', 'a3', 'a4', 'a5']
const wpIcons = ['w1', 'w2', 'w3', 'w4', 'w5', 'w6']
const mtTop = ['mt1', 'mt2', 'mt3', 'mt4', 'mt5']
const mtBot = ['mt6', 'mt7', 'mt8', 'mt9', 'mt10', 'mt11']

const tbLeft = [
  { n: 't1', w: 24, on: true }, { n: 't2', w: 22 }, { n: 't3', w: 27 }, { n: 't4', w: 23 }
]
const tbLeft2 = [{ n: 't5', w: 24, on: true }, { n: 't6', w: 22 }]
const tbRight = [
  { n: 't7', w: 27 }, { n: 't8', w: 24 }, { n: 't9', w: 19 }, { caret: 1 },
  { n: 't10', w: 26 }, { n: 't11', w: 23 }, { n: 't12', w: 25 }, { n: 't13', w: 24 }, { caret: 1 },
  { n: 't14', w: 27 }, { n: 't15', w: 24 }, { sep: 1 },
  { n: 't16', w: 26 }, { n: 't17', w: 24 }, { n: 't18', w: 25 }, { n: 't19', w: 26 }, { n: 't20', w: 24 },
  { n: 't21', w: 26 }, { caret: 1 }, { n: 't22', w: 26 }, { caret: 1 }, { n: 't23', w: 32 }, { caret: 1 }, { n: 't24', w: 26 }, { caret: 1 }
]

const railItems = [
  { n: 'r_gear', mt: -9, s: 20 }, { n: 'r_asm', mt: 9 }, { n: 'r_align', mt: 0 }, { n: 'r_cyl', mt: -1 },
  { n: 'r_op', mt: 1, active: true }, { n: 'r_grid', mt: 0 }, { n: 'r_mach', mt: 1 }, { n: 'r_books', mt: -1 },
  { n: 'r_info', mt: 13 }, { n: 'r_doc', mt: 12 }, { n: 'r_clock', mt: 11 }, { n: 'r_rain', mt: 1 },
  { n: 'r_path', mt: -1 }, { n: 'r_wrench', mt: 0 }, { n: 'r_mach2', mt: 2 }
]

const headers = ['名称', '换刀', '刀轨', '刀具', '刀具号', '时间', '几何']
const op = (name, d, no, time, color, extra = {}) => ({ name, d, no, time, color, lvl: 2, bang: true, ...extra })
const rows = [
  { name: 'NC_PROGRAM', time: '03:31:09', lvl: 0 },
  { name: '未用项', time: '02:26:03', lvl: 1, folder: true, tv1: 'bot' },
  op('开粗', 'D10', '2', '01:45:55', 'gray', { tool: true, cur: true, tv1: 'full', tv2: 'full' }),
  op('开粗2', 'D10', '2', '00:22:34', 'gray', { tv1: 'full', tv2: 'full' }),
  op('开粗3-1', 'D10', '2', '00:04:09', 'gray', { tv1: 'full', tv2: 'full' }),
  op('开粗3-2', 'D10', '2', '00:03:10', 'gray', { tv1: 'full', tv2: 'full' }),
  op('开粗3-3', 'D10', '2', '00:05:02', 'gray', { tv1: 'full', tv2: 'full' }),
  op('开粗3-1_COPY', 'D10', '2', '00:05:01', '', { sel: true, tv1: 'full', tv2: 'top' }),
  { name: 'PROGRAM', time: '01:05:06', lvl: 1, folder: true, bang: true, tv1: 'top' },
  op('飞面', 'D16', '1', '00:04:51', 'purple', { tool: true, tv2: 'full' }),
  op('开粗1', 'D10', '2', '00:03:31', 'purple', { tool: true, tv2: 'full' }),
  op('开粗2_COPY', 'D10', '2', '00:50:17', '', { tv2: 'full' }),
  op('开粗4', 'D8', '3', '00:05:51', 'purple', { tool: true, tv2: 'top' })
]

const depRows = [
  { t: '开粗3-1_COPY', ic: 'op', lvl: 0, minus: true },
  { t: '子项', ic: 'folderopen', lvl: 1, vA: 'full' },
  { t: '父项', ic: 'folderopen', lvl: 1, minus: true, vA: 'top' },
  { t: '未用项（程序顺序）', ic: 'folderp', lvl: 2, vB: 'full' },
  { t: 'D10', ic: 'toolmini', lvl: 2, vB: 'full' },
  { t: '一夹', ic: 'geom', lvl: 2, vB: 'full' },
  { t: 'MILL_ROUGH', ic: 'mill', lvl: 2, vB: 'top' }
]

// tool path: 24 nested lines, hairpins on top
const midX = [258, 275, 293, 308, 325, 342, 358, 375, 392, 408, 425, 500, 570, 620, 660, 695, 727, 760, 787, 815, 840, 865, 890, 912].map((z) => 740 + z / 1.742)

const spline = (pts) => {
  let d = `M${pts[0][0].toFixed(1)} ${pts[0][1].toFixed(1)}`
  const clamp = (tx, ty, len) => {
    const m = Math.hypot(tx, ty) || 1
    const k = Math.min(1, (0.4 * len) / m)
    return [tx * k, ty * k]
  }
  for (let i = 0; i < pts.length - 1; i++) {
    const a = pts[Math.max(0, i - 1)]
    const b = pts[i]
    const c = pts[i + 1]
    const e = pts[Math.min(pts.length - 1, i + 2)]
    const len = Math.hypot(c[0] - b[0], c[1] - b[1])
    const t1 = clamp((c[0] - a[0]) / 6, (c[1] - a[1]) / 6, len)
    const t2 = clamp((e[0] - b[0]) / 6, (e[1] - b[1]) / 6, len)
    d += `C${(b[0] + t1[0]).toFixed(1)} ${(b[1] + t1[1]).toFixed(1)} ${(c[0] - t2[0]).toFixed(1)} ${(c[1] - t2[1]).toFixed(1)} ${c[0].toFixed(1)} ${c[1].toFixed(1)}`
  }
  return d
}

const buildLine = (i) => {
  const pts = [[1156 + 9.54 * i, 381], [1156 + 9.7 * i, 458]]
  const rx = 141 + 9.74 * i
  const ry = 124 + 9.2 * i
  const end = i <= 10 ? 90 : 66 - (i - 11) * 3.17
  for (let a = 0; a <= end; a += 12) {
    const r = (a * Math.PI) / 180
    pts.push([1015 + rx * Math.cos(r), 503 + ry * Math.sin(r)])
  }
  const mx = midX[i]
  if (i <= 10) {
    const yU = 627 + 9.2 * i
    const yL = 870 - 9.7 * i
    pts.push([1015, yU])
    if (mx + 24 < 1005) pts.push([mx + 24, yU])
    pts.push([mx + 6, yU + 4], [mx, yU + 18], [mx, yL - 18], [mx + 6, yL - 4], [mx + 24, yL], [Math.max(mx + 44, 1004 - 0.6 * i), yL])
  } else {
    const er = (end * Math.PI) / 180
    pts.push([1015 + rx * Math.cos(er), 503 + ry * Math.sin(er)])
    pts.push([mx + 10, 727], [mx, 750], [mx + 7, 766])
  }
  pts.push([1084 + 10 * i, 897 - 3.48 * i], [1118 + 9.43 * i, 925 - 3.26 * i], [1142 + 9.98 * i, 973], [1149 + 9.75 * i, 1015], [1153 + 9.6 * i, 1058])
  return spline(pts)
}

const toolPaths = []
for (let i = 0; i < 24; i++) toolPaths.push(buildLine(i))
for (let i = 0; i < 23; i += 2) {
  const a = 1156 + 9.54 * i
  const b = a + 9.54
  const y = i === 0 ? 379 : 381
  toolPaths.push(`M${a.toFixed(1)} 381C${a.toFixed(1)} ${y - 7} ${b.toFixed(1)} ${y - 7} ${b.toFixed(1)} 381`)
}

const redTop = spline([[1156, 301], [1142, 303], [1113, 317], [1090, 332], [1084, 350], [1084, 383], [1093, 417], [1107, 443], [1125, 467], [1136, 480], [1153, 481], [1182, 467], [1193, 443], [1193, 353], [1176, 343], [1168, 337], [1142, 332], [1112, 327]])
const redBottom = spline([[1125, 1011], [1165, 1009], [1199, 1005], [1257, 1003], [1314, 1007], [1369, 1007], [1392, 1027], [1394, 1050], [1360, 1061], [1314, 1061], [1228, 1055], [1216, 1052], [1107, 1053], [1093, 1047], [1093, 1037], [1113, 1027], [1142, 1023], [1165, 1009]])
</script>

<style>
html, body { margin: 0; background: #fff; }
</style>

<style scoped>
.app {
  width: 1920px;
  height: 1080px;
  display: flex;
  flex-direction: column;
  overflow: hidden;
  font-family: Roboto, "Noto Sans CJK SC", sans-serif;
  font-size: 14px;
  color: #222;
  background: #fff;
}
.caret {
  display: inline-block;
  width: 0;
  height: 0;
  border-left: 5px solid transparent;
  border-right: 5px solid transparent;
  border-top: 5px solid #222;
}
.caret.small { border-left-width: 4px; border-right-width: 4px; border-top-width: 5px; }

/* title bar */
.titlebar { height: 30px; display: flex; align-items: center; flex: none; }
.qa { width: 1058px; display: flex; align-items: center; height: 30px; padding-left: 4px; box-sizing: border-box; }
.nx { width: 42px; font: 700 27px/30px "Liberation Sans", sans-serif; color: #8f9ca6; letter-spacing: -1px; }
.vsep { width: 1px; height: 24px; background: #ddd; margin: 0 1px; }
.qbtn { width: 23px; height: 24px; display: flex; align-items: center; justify-content: center; }
.qbtn.wide { width: 29px; }
.qbtn.dim { opacity: .75; }
.qbtn.b-brush { margin-right: 5px; }
.qa > .caret { margin: 0 4px 0 1px; }
.qa > .c-undo { margin-right: 8px; }
.qa > .c-tr { margin-right: 8px; }
.qa > .caret.under { margin-left: 1px; box-shadow: 0 -3px 0 -1px #222; }
.qtext { margin: 0 1px 0 2px; white-space: nowrap; line-height: 30px; }
.qtext.tight { margin-right: 2px; }
.apptitle { width: 682px; line-height: 30px; font-size: 15px; letter-spacing: .5px; }
.siemens { width: 90px; font: 700 16px/30px "Open Sans", sans-serif; color: #009a9a; letter-spacing: .1px; }
.winbtns { flex: 1; display: flex; align-items: center; justify-content: flex-start; gap: 14px; padding-left: 6px; }

/* tabs */
.tabs { height: 32px; flex: none; background: #dadada; display: flex; align-items: stretch; font-size: 16px; }
.tab-file { width: 91px; margin-right: 2px; background: #55a0b9; color: #fff; text-align: center; line-height: 30px; }
.tab { width: 58px; text-align: center; line-height: 34px; color: #222; }
.tab:last-of-type { width: 90px; }
.tab.active { background: #fff; color: #0e7090; border-top: 1px solid #c8c8c8; box-sizing: border-box; }
.tabs-right { margin-left: auto; display: flex; align-items: center; font-size: 14px; padding-right: 9px; }
.search { width: 155px; height: 23px; box-sizing: border-box; border: 1px solid #aaa; background: #fff; display: flex; align-items: center; justify-content: space-between; padding: 0 4px 0 2px; margin-right: 10px; line-height: 21px; }
.tr-ic { width: 25px; display: flex; justify-content: center; }
.tr-ic.cap { width: 26px; }
.tut { margin-left: 2px; }

/* ribbon */
.ribbon { height: 106px; flex: none; display: flex; border-bottom: 1px solid #d8d8d8; box-sizing: border-box; }
.group { flex: none; display: flex; flex-direction: column; padding-top: 5px; box-sizing: border-box; position: relative; }
.group::after { content: ""; position: absolute; right: 0; top: 5px; bottom: 4px; width: 1px; background: #ddd; }
.g1 { width: 342px; } .g2 { width: 56px; } .g3 { width: 368px; } .g4 { width: 134px; }
.g5 { width: 241px; } .g6 { width: 155px; } .g7 { width: 150px; } .g8 { width: 79px; }
.g9 { width: 148px; } .g10 { width: 133px; } .g11 { width: 90px; }
.gbody { height: 78px; display: flex; align-items: flex-start; }
.g1 .gbody { padding-left: 5px; }
.g3 .gbody { padding-left: 6px; }
.g9 .gbody { padding-left: 3px; }
.glabel { height: 22px; display: flex; align-items: center; justify-content: center; color: #0e7ba0; font-size: 14px; line-height: 24px; position: relative; padding-right: 20px; }
.glabel .caret { position: absolute; right: 8px; top: 9px; }
.glabel.left { justify-content: flex-start; padding-left: 3px; padding-right: 0; }
.glabel.wide { padding-right: 12px; letter-spacing: .3px; white-space: nowrap; }
.big { display: flex; flex-direction: column; align-items: center; height: 78px; flex: none; white-space: nowrap; line-height: 20px; }
.big svg { height: 36px; }
.big > span { margin-top: 1px; }
.big .caret { margin-top: 9px; }
.big.fill { width: 100%; }
.w72 { width: 72px; } .w66 { width: 66px; } .w65 { width: 65px; } .w51 { width: 51px; } .w64 { width: 64px; }
.w50 { width: 50px; } .w90 { width: 92px; margin-left: -3px; letter-spacing: .4px; } .w58 { width: 52px; } .w90b { width: 90px; } .w60 { width: 62px; margin-left: 3px; }
.morebox { width: 36px; height: 34px; border: 1px solid #ddd; border-radius: 4px; display: flex; align-items: center; justify-content: center; box-sizing: border-box; margin-bottom: 2px; }
.smalls { width: 95px; display: flex; flex-direction: column; padding-left: 2px; box-sizing: border-box; margin-top: -3px; }
.sm { height: 26px; display: flex; align-items: center; gap: 2px; line-height: 20px; white-space: nowrap; }
.iconcol { display: flex; flex-direction: column; gap: 9px; width: 18px; }
.iconcol.three { width: 20px; margin-left: -3px; margin-right: 5px; gap: 8px; }
.iconcol.two { width: 30px; margin: 2px 6px 0 9px; gap: 10px; }
.dispgrid { display: grid; grid-template-columns: 40px 40px 40px; grid-auto-rows: 26.5px; padding-left: 10px; margin-top: -1px; }
.dcell { display: flex; align-items: center; gap: 5px; }
.dic { width: 22px; height: 22px; display: flex; align-items: center; justify-content: center; box-sizing: border-box; }
.dic.on { background: #c6e3ec; border: 1px solid #a8d2de; }
.playcol { padding: 8px 0 0 20px; width: 50px; flex: none; display: flex; flex-direction: column; gap: 17px; }
.pl { display: flex; align-items: center; gap: 4px; height: 20px; white-space: nowrap; }
.animgrid { display: grid; grid-template-columns: 31px 31px; grid-auto-rows: 26px; margin: 2px 0 0 -4px; width: 62px; flex: none; justify-items: center; }
.speed { width: 104px; flex: none; margin-left: -3px; display: flex; flex-direction: column; align-items: center; }
.spin { width: 104px; flex: none; height: 24px; margin-top: 4px; border: 1px solid #aaa; box-sizing: border-box; display: flex; align-items: center; justify-content: space-between; padding: 0 8px 0 3px; font-size: 15px; }
.speedlabel { margin-top: 9px; line-height: 20px; }
.wpgrid { display: grid; grid-template-columns: 25px 25px; grid-auto-rows: 26px; margin: 1px 0 0 14px; width: 52px; flex: none; }
.tools { flex-direction: column; padding: 7px 0 0 6px; gap: 12px; }
.toolrow { display: flex; gap: 3.8px; }
.sepic { margin-left: 1px; border-left: 1px solid #ccc; padding-left: 4px; }
.ribbon-end { flex: 1; position: relative; }
.ribbon-end .caret { position: absolute; left: 6px; bottom: 7px; }

/* toolbar */
.toolbar { height: 32px; flex: none; display: flex; align-items: center; position: relative; padding-top: 4px; box-sizing: border-box; }
.menu-btn { display: flex; align-items: center; padding-left: 8px; width: 99px; box-sizing: border-box; gap: 4px; white-space: nowrap; }
.tsep { width: 1px; height: 28px; background: #ddd; margin: 0 4px; }
.tsep.grow { margin: 0 8px; }
.tsep.mid { margin: 0 7px; }
.tsep.last { margin-left: 7px; }
.tb { height: 28px; display: flex; align-items: center; justify-content: center; flex: none; }
.tb.on { background: #c6e3ec; box-shadow: inset 0 0 0 1px #a8d2de; }
.tb.caretonly { width: 13px; }
.sel-box { height: 24px; box-sizing: border-box; border: 1px solid #aaa; display: flex; align-items: center; justify-content: space-between; padding: 0 7px 0 3px; line-height: 22px; font-size: 15px; flex: none; }
.s1 { width: 167px; margin: 0 9px 0 15px; }
.s2 { width: 175px; margin-right: 3px; }
.corner { position: absolute; right: 5px; top: 21px; }

/* main */
.main { flex: 1; display: flex; min-height: 0; padding-top: 3px; box-sizing: border-box; }
.rail { width: 32px; flex: none; background: #dcdcdc; border-top: 1px solid #9a9a9a; border-right: 1px solid #a8a8a8; box-sizing: border-box; display: flex; flex-direction: column; overflow: hidden; }
.railitem { display: flex; align-items: center; justify-content: center; flex: none; box-sizing: border-box; height: 42px; }
.railitem.active { background: #fff; margin-left: 2px; width: 31px; height: 44px; border-top: 1px solid #a8a8a8; border-bottom: 1px solid #a8a8a8; border-left: 1px solid #a8a8a8; }
.panel { width: 706px; flex: none; border-top: 1px solid #9a9a9a; border-right: 1px solid #bbb; box-sizing: border-box; display: flex; flex-direction: column; padding: 0 9px 0 7px; }
.panel-head { height: 33px; flex: none; display: flex; align-items: center; justify-content: space-between; padding: 0 6px 0 3px; line-height: 20px; }
.maxbox { width: 13px; height: 12px; border: 1px solid #222; border-top-width: 3px; }
.table { height: 523px; flex: none; overflow: hidden; position: relative; font-size: 15px; width: 688px; }
.trow { display: grid; grid-template-columns: 201px 99px 50px 100px 100px 100px 38px; height: 24px; box-sizing: border-box; border-bottom: 1px solid #e8e8e8; line-height: 25px; background: #fff; }
.trow.alt { background: #f9f9f9; }
.trow .cell { border-right: 1px solid #e8e8e8; padding-left: 5px; box-sizing: border-box; white-space: nowrap; overflow: hidden; position: relative; }
.trow .cell:first-child { border-right: 1px solid #111; padding-left: 4px; }
.trow .cell:last-child { border-right: 0; }
.thead { background: #f0f0f0; border-bottom: 2px solid #d8d8d8; }
.thead .cell { border-right-color: #ddd; padding-left: 6px; }
.thead .cell:first-child { border-right: 1px solid #ddd; padding-left: 7px; }
.trow.gray { color: #7fb0a2; }
.trow.purple { color: #6a34cc; }
.trow.picked .cell { background: #8bc1d2; }
.trow.picked .cell:first-child { background: none; }
.namecell { display: flex; align-items: center; }
.namecell .lbl { white-space: nowrap; letter-spacing: .5px; }
.namecell.lvl2 { padding-left: 38px !important; }
.namecell.lvl1 { padding-left: 5px !important; }
.namecell.lvl2 .bang { margin: 0; flex: none; }
.namecell.lvl2 .opic { margin: 0 2px 0 -2px; flex: none; }
.trow.picked .lbl { background: #8bc1d2; flex: 1; padding-left: 2px; margin-left: -2px; height: 23px; }
.minus { width: 10px; height: 10px; border: 1px solid #bbb; background: #fff; box-sizing: border-box; display: inline-block; position: relative; flex: none; z-index: 1; }
.minus::after { content: ""; position: absolute; left: 1px; right: 1px; top: 3px; height: 2px; background: #222; }
.lvl1 .minus { margin-right: 6px; }
.lvl1 .fold { margin-right: 3px; flex: none; }
.lvl1 .bang { margin: 0 0 0 -1px; flex: none; }
.tv { position: absolute; border-left: 1px dotted #999; width: 0; }
.tv1 { left: 10px; } .tv2 { left: 30px; }
.tv.full { top: 0; bottom: 0; } .tv.top { top: 0; height: 12px; } .tv.bot { top: 12px; bottom: 0; }
.th { position: absolute; left: 30px; top: 12px; width: 10px; border-top: 1px dotted #999; }
.th1 { left: 15px; width: 6px; }
.toolmini { margin-top: 3px; margin-left: 0; }
.tick { margin-top: 4px; margin-left: 1px; }

.hscroll { height: 19px; flex: none; background: #f0f0f0; display: flex; align-items: center; width: 688px; padding: 0 3px; box-sizing: border-box; }
.htrack { flex: 1; height: 19px; padding-left: 5px; }
.hthumb { width: 521px; height: 19px; background: #cdcdcd; }
.splitter { height: 5px; flex: none; margin-top: 3px; background: #c8c8c8; border-top: 1px solid #999; border-bottom: 1px solid #999; box-sizing: border-box; width: 690px; }

.sect-title { height: 32px; flex: none; display: flex; align-items: center; justify-content: space-between; color: #0e7ba0; font-size: 18px; padding: 0 5px 0 6px; width: 690px; box-sizing: border-box; line-height: 24px; }
.sect-title.second { margin-top: 7px; height: 31px; border-top: 1px solid #d8d8d8; border-bottom: 3px solid #d8d8d8; padding-top: 1px; }
.dep { display: flex; height: 194px; flex: none; font-size: 15px; }
.dep-tree { width: 643px; margin-left: 6px; border: 1px solid #ccc; box-sizing: border-box; }
.deprow { height: 24px; box-sizing: border-box; border-bottom: 1px solid #e4e4e4; display: flex; align-items: center; position: relative; line-height: 23px; background: #fff; padding: 3px 0 0 1px; }
.deprow .lbl { letter-spacing: .5px; }
.deprow.alt { background: #f9f9f9; }
.deprow:last-child { height: 25px; border-bottom: 0; }
.dv1 { left: 29px; } .dv2 { left: 48px; }
.dep-tree .th.dh1 { left: 30px; width: 10px; }
.dep-tree .th.dh2 { left: 48px; width: 10px; }
.dep-tree .minus { position: absolute; }
.dep-tree .minus.dm0 { left: 6px; top: 8px; }
.dep-tree .minus.dm1 { left: 24px; top: 8px; }
.di0 { margin-left: 21px; margin-right: 1px; flex: none; }
.di1 { margin-left: 38px; margin-right: 2px; flex: none; }
.di2 { margin-left: 56px; margin-right: 3px; flex: none; }
.dep-btns { width: 32px; margin-left: 2px; display: flex; flex-direction: column; gap: 2px; }
.dbtn { width: 32px; height: 32px; box-sizing: border-box; border: 1px solid #ddd; display: flex; align-items: center; justify-content: center; }
.dbtn.strong { border-color: #aaa; }

/* viewport */
.viewarea { flex: 1; display: flex; flex-direction: column; margin-left: 2px; min-width: 0; margin-top: -3px; }
.tabstrip { height: 30px; flex: none; border-bottom: 2px solid #55a0b9; box-sizing: border-box; display: flex; align-items: flex-end; }
.filetab { width: 98px; height: 23px; background: #5aa2bb; color: #fff; display: flex; align-items: center; font-size: 16px; padding-left: 1px; box-sizing: border-box; }
.filetab span { margin: 0 7px 0 8px; }
.filetab svg:last-child { margin-left: 7px; }
.canvas { flex: 1; position: relative; background: linear-gradient(#b4b5b8, #d0d1d3 45%, #e6e7e9 85%); }
.drawing { position: absolute; left: 0; top: 0; overflow: visible; z-index: 2; }
.axis { font: 12px "Liberation Sans", sans-serif; }
.axis.y { fill: #4aa04a; text-anchor: middle; }
.axis.x { fill: #d84a3a; }

/* status */
.status { height: 23px; flex: none; border-top: 1px solid #b8b8b8; box-sizing: border-box; display: flex; align-items: center; position: relative; background: #fff; }
.status-text { margin-left: 917px; font-weight: 700; line-height: 22px; letter-spacing: .2px; }
.watermark { position: absolute; left: 1723px; top: 4px; font: 14px/18px "Liberation Mono", "Noto Sans CJK SC", monospace; color: #666; letter-spacing: .3px; white-space: nowrap; }
.wm-ic { position: absolute; left: 1850px; top: 2px; }
.bottomedge { height: 2px; flex: none; background: #3a3a3a; }
</style>
